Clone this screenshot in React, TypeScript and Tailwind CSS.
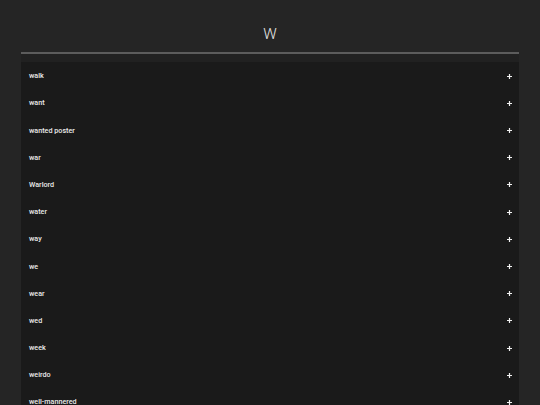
const words = [
  'walk',
  'want',
  'wanted poster',
  'war',
  'Warlord',
  'water',
  'way',
  'we',
  'wear',
  'wed',
  'week',
  'weirdo',
  'well-mannered',
  'west',
  'wet',
  'what',
];

function Plus() {
  return (
    <svg width="5" height="5" viewBox="0 0 5 5" className="shrink-0">
      <path d="M2.5 0v5M0 2.5h5" stroke="#f2f2f2" strokeWidth="1.2" />
    </svg>
  );
}

export default function App() {
  return (
    <div
      className="min-h-screen bg-[#252525] px-[21px] pt-[27px] text-white"
      style={{ fontFamily: 'Roboto, "Noto Sans", sans-serif' }}
    >
      <h1 className="text-center text-[15px] leading-[15px] font-light text-[#e8e8e8]">W</h1>
      <div className="mt-[10px] h-[2px] bg-[#5c5c5c]" />
      <div className="h-[8px] bg-[#212121]" />
      <ul className="bg-[#1a1a1a] pt-[0.6px]">
        {words.map((w) => (
          <li
            key={w}
            className="flex h-[27.2px] items-center justify-between pl-[8px] pr-[7px] text-[7.2px] leading-[8px] font-medium text-[#ececec]"
          >
            <span>{w}</span>
            <Plus />
          </li>
        ))}
      </ul>
    </div>
  );
}
